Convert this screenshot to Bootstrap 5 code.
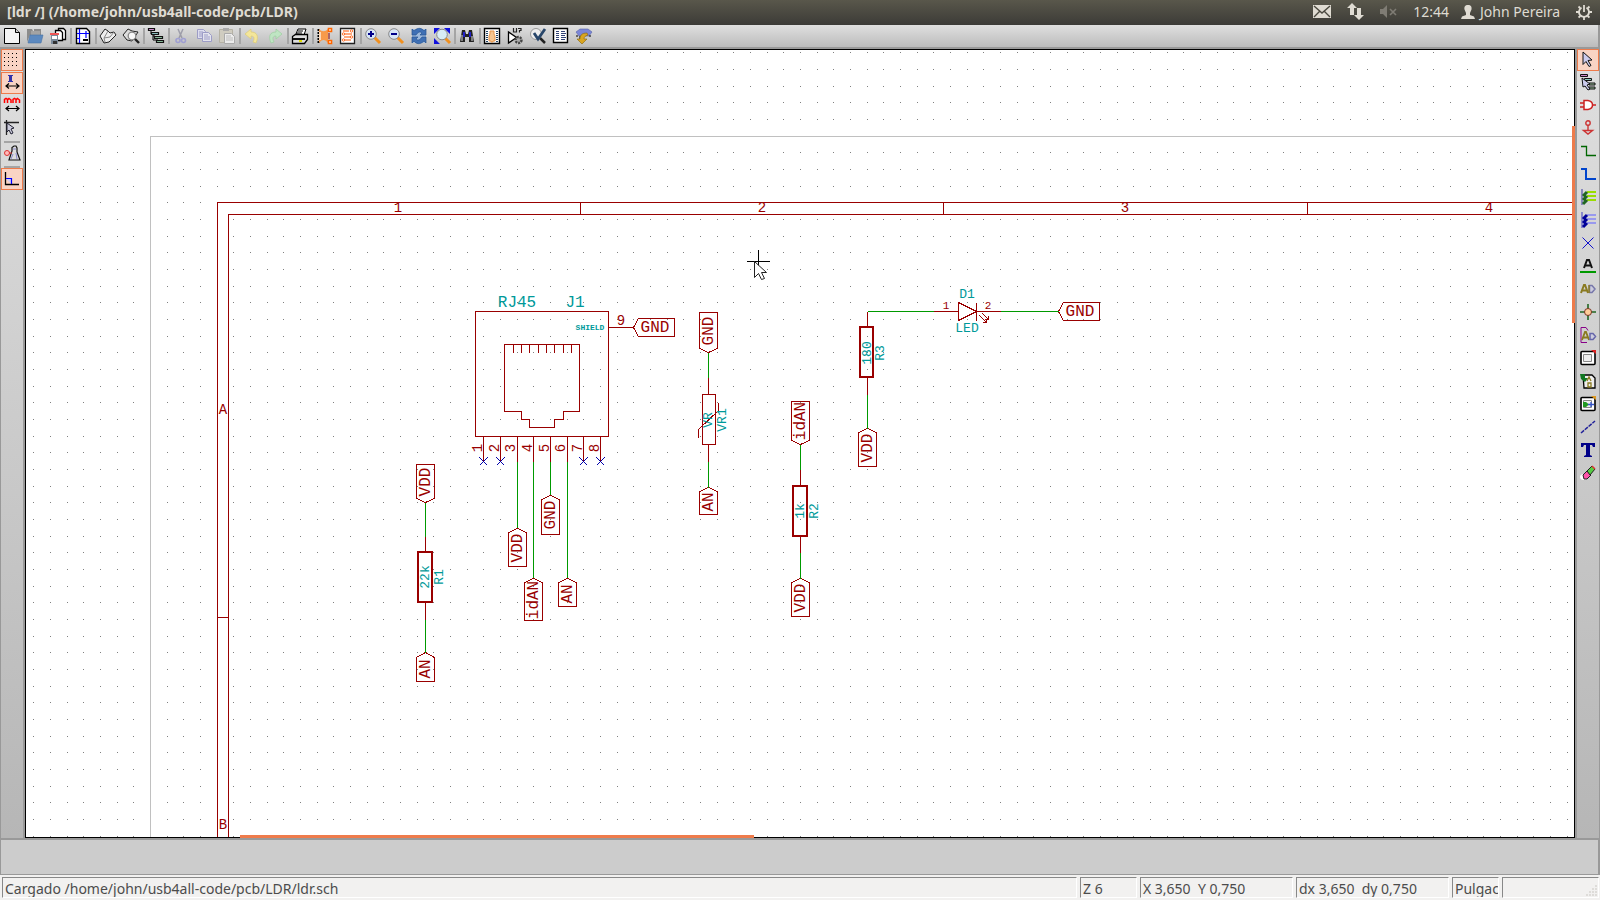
<!DOCTYPE html>
<html lang="es">
<head>
<meta charset="utf-8">
<meta name="viewport" content="width=device-width, initial-scale=1">
<title>[ldr /] (/home/john/usb4all-code/pcb/LDR)</title>
<link href="https://cdn.jsdelivr.net/npm/bootstrap@5.3.0/dist/css/bootstrap.min.css" rel="stylesheet">
<style>
body{font-family:"Noto Sans","Open Sans",sans-serif;font-size:14px;line-height:20px;background:#999}
.titlebar{height:25px;background:linear-gradient(#59574b,#3c3b37);color:#dfdbd2;font-size:14px;padding:0 8px 2px 7px}
.titlebar svg{display:block}
.user-icon{margin:0 5px 0 12px}
.toolstrip{height:22px;background:linear-gradient(#dfdfdf,#bcbcbc);padding-left:1px;margin-right:2px}
.tool{width:23px;height:22px;padding:3px 4px 3px 3px;border:0;background:none;flex:none}
.tool svg,.sidetool svg{display:block;width:16px;height:16px;overflow:visible}
.vrule{width:2px;height:16px;background:#a5a5a5;flex:none}
.workarea{margin-top:2px;min-height:0}
.sidebar-l,.sidebar-r{background:linear-gradient(#dfdfdf,#b6b6b6);flex:none}
.sidebar-l{width:23px;border-left:1px solid #999;margin-right:2px}
.sidebar-r{width:23px;margin-left:2px;border-right:1px solid #999}
.sidetool{width:22px;height:22px;margin-bottom:1px;padding:1px 2px 3px;border:1px solid transparent;background:none;flex:none}
.sidetool.chosen{background:#f9d4c4;border-color:#ee7b4b}
.hrule{height:2px;width:16px;margin-left:3px;background:#a5a5a5;flex:none}
.sheet{background:#fff;border:1px solid #000;min-width:0}
.sheet>svg{position:absolute;inset:0;width:100%;height:100%}
.bar-v,.bar-h{position:absolute;background:#ee7b4b}
.bar-v{right:-1px;top:9.7%;height:25%;width:3px}
.bar-h{bottom:-1px;left:13.8%;width:33.2%;height:3px}
.msgpanel{height:36px;margin:1px 1px 0 0;background:#ccc;border:1px solid #999}
.statusline{background:#f2f1f0;height:25px;padding:2px 1px 2px 2px;gap:3px;color:#4c4c4c}
.cell{border-top:1px solid #888;border-left:1px solid #888;border-right:1px solid #fff;border-bottom:1px solid #fff;padding-left:2px;height:21px;line-height:21px;white-space:pre;overflow:hidden;flex:none}
.w-z{width:57px}.w-xy{width:153px}.w-u{width:47px}.w-e{width:97px}
.sch{fill:none;stroke:#900;stroke-width:1;shape-rendering:crispEdges}
.sch .wire{stroke:#090}
.sch .nc{stroke:#00a}
.sch .thick{stroke-width:2}
.sch text{stroke:none;fill:#900;font-family:"Liberation Mono",monospace;font-size:16px;text-anchor:middle}
.sch .ref{fill:#099}
.sch .s13{font-size:13px}
.sch .s14{font-size:14px}
.sch .s11{font-size:11px}
.sch .s8{font-size:8px;font-weight:bold}
</style>
</head>
<body class="vh-100 d-flex flex-column overflow-hidden">
<header class="titlebar d-flex align-items-center justify-content-between flex-shrink-0">
  <span class="fw-bold">[ldr /] (/home/john/usb4all-code/pcb/LDR)</span>
  <div class="d-flex align-items-center">
    <svg width="18" height="13" viewBox="0 0 18 13"><path fill="#dfdbd2" d="M0 0h18v13H0z"/><path d="M1 1l8 7 8-7M1 12l6-6M17 12l-6-6" fill="none" stroke="#4a483f" stroke-width="1.4"/></svg>
    <svg class="ms-3" width="17" height="17" viewBox="0 0 17 17" fill="#dfdbd2"><path d="M5 0l5 5H7v7H3V5H0zM12 17l5-5h-3V5h-4v7H7z"/></svg>
    <svg class="ms-3" width="17" height="14" viewBox="0 0 17 14"><path fill="#7f7c74" d="M0 4h3l4-4v13l-4-4H0z"/><path d="M10 4l6 6M16 4l-6 6" stroke="#7f7c74" stroke-width="1.6"/></svg>
    <span class="ms-3">12:44</span>
    <svg class="user-icon" width="14" height="14" viewBox="0 0 14 14"><path fill="#dfdbd2" d="M7 0c3 0 4 2 3.500 4.500L9 8v2l4 1.500 1 2.500H0l1-2.500L5 10V8L3.500 4.500C3 2 4 0 7 0z"/></svg>
    <span class="me-3">John Pereira</span>
    <svg width="16" height="16" viewBox="0 0 16 16" fill="none" stroke="#dfdbd2"><path stroke-width="1.800" d="M5.500 3.600a5 5 0 1 0 5 0M8 1v7"/><path stroke-width="1.800" d="M2.500 2.500l1.500 1.500M13.500 2.500L12 4M0 8h3M13 8h3M2.500 13.500L4.500 12M13.500 13.500L11.500 12M8 13v3"/></svg>
  </div>
</header>

<nav class="toolstrip d-flex align-items-center flex-shrink-0" aria-label="Herramientas">
  <button class="tool" aria-label="Nuevo"><svg viewBox="0 0 16 16"><path d="M.5.500h11l4 4v11H.5z" fill="#f4f4f4" stroke="#000"/><path d="M11.500.500v4h4" fill="#ccc" stroke="#000"/></svg></button>
  <button class="tool" aria-label="Abrir"><svg viewBox="0 0 16 16"><path d="M0 14V1h5l1 2h1V1h7v6H3z" fill="#8b8b8b"/><path d="M4 4h9M4 6h9" stroke="#bbb"/><path d="M1 15l2-8h13l-2 8z" fill="#5c89bf" stroke="#4872a5" stroke-width=".6"/></svg></button>
  <button class="tool" aria-label="Guardar"><svg viewBox="0 0 16 16"><path d="M8.500.500h5l2 2v9h-7z" fill="#fff" stroke="#000" stroke-width="1.300"/><path d="M5.500 2.500h5l2 2v8h-7z" fill="#fff" stroke="#000" stroke-width="1.300"/><path d="M1 6h7v10H1z" fill="#7a8a9a"/><path d="M0 5h9v2H0z" fill="#e55"/><path d="M2 8h5v3H2z" fill="#fff"/><path d="M3 13h4v3H3z" fill="#333"/></svg></button>
  <i class="vrule"></i>
  <button class="tool" aria-label="Página"><svg viewBox="0 0 16 16"><path d="M1.500.500h10l3 3v12h-13z" fill="#fff" stroke="#000" stroke-width="1.400"/><path d="M4.500 1v14M2 5.500h12M11 3v7M2 10.500h3" stroke="#00f" stroke-width="1.200"/><path d="M8 11h5v2H8z" fill="#000"/></svg></button>
  <i class="vrule"></i>
  <button class="tool" aria-label="Biblioteca"><svg viewBox="0 0 16 16"><path d="M0 8l5-7 3 2 2 2 4-1 2 3-7 7-5 1z" fill="#eee" stroke="#222"/><path d="M8 3L4 10l1 4M4 10l6-1 4-5" fill="none" stroke="#888"/></svg></button>
  <button class="tool" aria-label="Examinar"><svg viewBox="0 0 16 16"><path d="M0 7l5-6 4 2 6 1-6 9-5-1z" fill="#ddd" stroke="#222"/><circle cx="9" cy="8" r="3.800" fill="#f7f7f7" stroke="#888" stroke-width="1.300"/><path d="M12 11l4 4" stroke="#222" stroke-width="2.400"/></svg></button>
  <i class="vrule"></i>
  <button class="tool" aria-label="Jerarquía"><svg viewBox="0 0 16 16"><path d="M3 3v3h3v3h3v5h3M5 6v6h3" fill="none" stroke="#000"/><g stroke="#111" stroke-width="1.200"><path d="M.5.500h6v2h-6z" fill="#c8c"/><path d="M3.500 4.500h7v2h-7z" fill="#8bb"/><path d="M6.500 8.500h8v2h-8zM8.500 12.500h7v2h-7z" fill="#8b9"/></g></svg></button>
  <i class="vrule"></i>
  <button class="tool" aria-label="Cortar" disabled><svg viewBox="0 0 16 16" opacity=".7"><path d="M5 1l4 9M10 1l-4 9" stroke="#889" stroke-width="1.500"/><g fill="none" stroke="#8f8fd8" stroke-width="1.600"><circle cx="5" cy="12.500" r="2"/><circle cx="10.500" cy="12.500" r="2"/></g></svg></button>
  <button class="tool" aria-label="Copiar" disabled><svg viewBox="0 0 16 16" stroke="#9c9cc6"><path d="M1.500 1.500h6l2 2v7h-8z" fill="#dde"/><path d="M3 4h4M3 6h3M3 8h3"/><path d="M6.500 4.500h6l3 3v6h-9z" fill="#e4e4ee"/><path d="M8 7h4M8 9h6M8 11h6"/></svg></button>
  <button class="tool" aria-label="Pegar" disabled><svg viewBox="0 0 16 16"><path d="M.500 1.500h13v13H.500z" fill="#cfccc0" stroke="#b5b2a5"/><path d="M4 0h6v3H4z" fill="#aaa"/><path d="M5.500 5.500h7l3 3v7h-10z" fill="#ececec" stroke="#aaa"/><path d="M7 8h5M7 10h7M7 12h7" stroke="#bbb"/></svg></button>
  <i class="vrule"></i>
  <button class="tool" aria-label="Deshacer" disabled><svg viewBox="0 0 16 16"><path d="M1 6l6-5v3c6 0 8 4 5 11l-3-1c2-4 1-6-2-6v3z" fill="#f4e69a" stroke="#dccb72" stroke-width=".7"/></svg></button>
  <button class="tool" aria-label="Rehacer" disabled><svg viewBox="0 0 16 16"><path d="M15 6L9 1v3C3 4 1 8 4 15l3-1C5 10 6 8 9 8v3z" fill="#bfe5c3" stroke="#9cce9f" stroke-width=".7"/></svg></button>
  <i class="vrule"></i>
  <button class="tool" aria-label="Imprimir"><svg viewBox="0 0 16 16"><path d="M4 6l2-5h8l-2 6z" fill="#fff" stroke="#000"/><path d="M6 3h5M5 5h5" stroke="#000"/><path d="M.5 8.500l3-2h12v5l-3 4H.5z" fill="#ddd" stroke="#000" stroke-width="1.300"/><path d="M1 10h12v2H1z" fill="#111"/><path d="M7 12h3v2H7z" fill="#dd0"/></svg></button>
  <i class="vrule"></i>
  <button class="tool" aria-label="Cvpcb"><svg viewBox="0 0 16 16"><path d="M1.500 1v14" stroke="#000" stroke-width="2" stroke-dasharray="2 1"/><path d="M2 1c3 3 6 3 9 0v14c-3-4-6-4-9 0z" fill="#f79a4a"/><path d="M3 4v8" stroke="#fdd9b8" stroke-width="2"/><path d="M12 5v6" stroke="#a66" stroke-width="2"/><path d="M11.500.500h3v3h-3zM11.500 12.500h3v3h-3z" fill="#fff" stroke="#f60" stroke-width="1.600"/></svg></button>
  <button class="tool" aria-label="Pcbnew"><svg viewBox="0 0 16 16"><path d="M.5.500h14v15H.5z" fill="#fff" stroke="#222" stroke-width="1.300"/><path d="M3 3h6M4 6h8M4 9h7M4 12h7" stroke="#f50"/><g fill="#fff" stroke="#f50" stroke-width=".8"><circle cx="11.500" cy="3" r="1.200"/><circle cx="3.500" cy="6" r="1.200"/><circle cx="11.500" cy="9" r="1.200"/><circle cx="3.500" cy="12" r="1.200"/></g></svg></button>
  <i class="vrule"></i>
  <button class="tool" aria-label="Acercar"><svg viewBox="0 0 16 16"><path d="M9.500 9.500l5.500 5.500" stroke="#f09020" stroke-width="3"/><circle cx="6" cy="6" r="5.300" fill="#d8e6f6" stroke="#888"/><path d="M6 3v6M3 6h6" stroke="#008" stroke-width="2"/></svg></button>
  <button class="tool" aria-label="Alejar"><svg viewBox="0 0 16 16"><path d="M9.500 9.500l5.500 5.500" stroke="#f09020" stroke-width="3"/><circle cx="6" cy="6" r="5.300" fill="#d8e6f6" stroke="#888"/><path d="M3 6h6" stroke="#008" stroke-width="2"/></svg></button>
  <button class="tool" aria-label="Redibujar"><svg viewBox="0 0 16 16"><path d="M1 1h14v14H1z" fill="#9db9dc"/><path d="M1 7V1l2 2c4-4 8-3 10 0l2-2v6H9l2-2c-2-2-4-1-6 2zM15 9v6l-2-2c-4 4-8 3-10 0l-2 2V9h6l-2 2c2 2 4 1 6-2z" fill="#3f70b5" stroke="#285490" stroke-width=".7"/></svg></button>
  <button class="tool" aria-label="Ajustar"><svg viewBox="0 0 16 16"><path d="M0 0h6L0 6zM16 0h-6l6 6zM0 16h6l-6-6z" fill="#11d"/><path d="M11 10l5 5" stroke="#f09020" stroke-width="3"/><circle cx="8" cy="6.500" r="5.300" fill="#d8ecf6" stroke="#888"/></svg></button>
  <i class="vrule"></i>
  <button class="tool" aria-label="Buscar"><svg viewBox="0 0 16 16"><path d="M3 2h3l1 4h2l1-4h3l1 6 1 6h-5V9H6v5H1l1-6z" fill="#222"/><path d="M5 4v5M11 4v5" stroke="#22e" stroke-width="1.600"/><path d="M3 7v6M13 8v5" stroke="#ddd"/></svg></button>
  <i class="vrule"></i>
  <button class="tool" aria-label="Huella"><svg viewBox="0 0 16 16"><path d="M.5.500h15v15H.5z" fill="#fff" stroke="#000" stroke-width="1.400"/><path d="M3 3v11M13 3v11" stroke="#246" stroke-width="2" stroke-dasharray="1 1"/><path d="M6 3h4v3l1 2v5H9v1H7v-1H5V8l1-2z" fill="#f6c590" stroke="#e8954a"/></svg></button>
  <button class="tool" aria-label="Anotar"><svg viewBox="0 0 16 16"><path d="M1.500 4v11l8-5.500z" fill="#fff" stroke="#000" stroke-width="1.300"/><path d="M6.500 0v4h3V0M11 .500h3v2h-1.500v2" fill="none" stroke="#222" stroke-width="1.200"/><circle cx="11.500" cy="12" r="3" fill="#aaa" stroke="#444" stroke-width="2.400" stroke-dasharray="2 1"/></svg></button>
  <button class="tool" aria-label="Comprobar"><svg viewBox="0 0 16 16"><circle cx="6" cy="6" r="5.500" fill="#eee" stroke="#999"/><path d="M10 10l5 5" stroke="#222" stroke-width="2.500"/><path d="M4 5l4 6 7-10" fill="none" stroke="#28466a" stroke-width="2.800"/></svg></button>
  <button class="tool" aria-label="Netlist"><svg viewBox="0 0 16 16"><path d="M.5.500h14v14H.5z" fill="#fff" stroke="#000" stroke-width="1.400"/><g stroke="#347" shape-rendering="crispEdges"><path d="M3 3.500h3M3 5.500h3M3 7.500h3M3 9.500h3M3 11.500h3" /><path d="M8 3.500h4M8 5.500h5M8 7.500h4M8 9.500h5M8 11.500h4"/></g></svg></button>
  <button class="tool" aria-label="BOM"><svg viewBox="0 0 16 16"><path d="M0 4l4-3h8l4 3-3 4H3z" fill="#7b86d8" stroke="#5661a8" stroke-width=".6"/><path d="M1 7v2M4 8v3M14 7v2" stroke="#444" stroke-width="1.500"/><path d="M11 5c-6 0-7 3-7 6H1l5 5 5-5H8c0-2 1-3 4-4z" fill="#d9a521" stroke="#86640c" stroke-width=".6"/></svg></button>
</nav>

<main class="workarea d-flex flex-fill">
  <aside class="sidebar-l d-flex flex-column">
    <button class="sidetool chosen" aria-label="Rejilla"><svg viewBox="0 0 16 16" fill="none" stroke="#000" stroke-width="1" stroke-dasharray="1 3" shape-rendering="crispEdges"><path d="M0 2.500h14M0 6.500h14M0 10.500h14M0 14.500h14"/></svg></button>
    <button class="sidetool chosen" aria-label="Pulgadas"><svg viewBox="0 0 16 16"><path d="M4 1h5v1H8v5h1v1H4V7h1V2H4z" fill="#33a"/><path d="M2 12h12M5 9.500L2 12l3 2.500M12 9.500l3 2.500-3 2.500" fill="none" stroke="#000" stroke-width="1.200"/></svg></button>
    <button class="sidetool" aria-label="Milímetros"><svg viewBox="0 0 16 16"><path d="M.500 6V2.500L2 1.500l1.500 1V6M3.500 3l1.500-1.500L7 3v3M9 6V2.500l1.500-1L12 2.500V6M12 3l1.500-1.500 2 1.500v3" fill="none" stroke="#f00" stroke-width="1.500"/><path d="M2 11.500h12M5 9l-3 2.500L5 14M12 9l3 2.500-3 2.500" fill="none" stroke="#000" stroke-width="1.200"/></svg></button>
    <button class="sidetool" aria-label="Cursor"><svg viewBox="0 0 16 16"><path d="M0 2.500h15M2.500 0v15" stroke="#222" stroke-width="1.300"/><path d="M3 3l7 5-3 1 2 4-2 1-2-4-2 2z" fill="#ccd" stroke="#223"/></svg></button>
    <i class="hrule"></i>
    <button class="sidetool" aria-label="Pines ocultos"><svg viewBox="0 0 16 16"><path d="M8 6V2.500L10 1h2l1 2v4l3 8H5z" fill="#ddd" stroke="#111" stroke-width="1.200"/><path d="M9 4h3M9 9l-2 5M12 8l1 6" stroke="#88c"/><circle cx="3" cy="8" r="2.500" fill="#fbb" stroke="#d33"/><path d="M5 8h3" stroke="#d33"/></svg></button>
    <i class="hrule"></i>
    <button class="sidetool chosen" aria-label="Ángulo recto"><svg viewBox="0 0 16 16"><path d="M1.500 2v12.500H15" fill="none" stroke="#000" stroke-width="1.300"/><path d="M2 8.500h5.500V14" fill="#ccf" stroke="#00f" stroke-width="1.200"/></svg></button>
  </aside>

  <section class="sheet flex-fill position-relative">
    <svg role="img" aria-label="Esquema LDR">
      <defs>
        <pattern id="grid" width="50" height="50" patternUnits="userSpaceOnUse" x="7" y="2">
          <path fill="#808080" shape-rendering="crispEdges" d="M0 0h1v1H0zM17 0h1v1h-1zM34 0h1v1h-1zM0 17h1v1H0zM17 17h1v1h-1zM34 17h1v1h-1zM0 34h1v1H0zM17 34h1v1h-1zM34 34h1v1h-1z"/>
        </pattern>
      </defs>
      <rect width="100%" height="100%" fill="url(#grid)"/>

      <!-- one-pixel lines, centred on the pixels -->
      <g class="sch" transform="translate(-25.500 -49.500)">
        <!-- sheet edge and frame -->
        <path stroke="#c0c0c0" d="M150 3000V136H4000"/>
        <path d="M217 3000V202H4000M228 3000V214H4000M580 202v12M943 202v12M1307 202v12M217 617h11"/>
        <!-- J1, RJ45 connector -->
        <path d="M475 311H608V436H475zM504 344H579V411H563V419H554V427H529V419H521V411H504z"/>
        <path d="M513 344v8M521 344v8M529 344v8M538 344v8M546 344v8M554 344v8M563 344v8M571 344v8"/>
        <path d="M483 436v25M500 436v25M517 436v25M533 436v25M550 436v25M567 436v25M583 436v25M600 436v25M608 327h25"/>
        <path class="nc" d="M479 457l8 8m0-8l-8 8M496 457l8 8m0-8l-8 8M579 457l8 8m0-8l-8 8M596 457l8 8m0-8l-8 8"/>
        <path d="M633 327l5-9h36v18h-36z"/>
        <path class="wire" d="M517 461v67M533 461v117M550 461v34M567 461v117"/>
        <path d="M517 528l9 4v34h-18v-34zM533 578l9 4v38h-18v-38zM550 495l9 4v35h-18v-35zM567 578l9 4v24h-18v-24z"/>
        <!-- R1 -->
        <path d="M416 464h18v34l-9 4-9-4zM425 536v16M425 602v17M425 652l9 5v24h-18v-24z"/>
        <path class="wire" d="M425 502v34M425 619v33"/>
        <!-- VR1 -->
        <path d="M699 312h18v36l-9 4-9-4zM708 377v17M702 394h13v50h-13zM708 444v17M708 487l9 4v23h-18v-23zM698 437v-8l20-19v-8"/>
        <path class="wire" d="M708 352v25M708 461v26"/>
        <!-- R2 -->
        <path d="M791 401h18v39l-9 4-9-4zM800 469v17M800 536v16M800 578l9 4v34h-18v-34z"/>
        <path class="wire" d="M800 444v25M800 552v26"/>
        <!-- R3 and D1 -->
        <path d="M867 311v16M867 377v17M867 428l9 4v34h-18v-34zM933 311h25M976 311h24M958 302v18l18-9zM976 302v18M1058 311l5-9h36v18h-36z"/>
        <path d="M979 315l7 7m0-4v4h-4M982 313l6 6m0-4v4h-4"/>
        <path class="wire" d="M867 311h66M1000 311h58M867 394v34"/>
        <!-- crosshair -->
        <path stroke="#000" d="M746 261h23M758 249v23"/>
      </g>

      <!-- resistor bodies, pointer and lettering -->
      <g class="sch" transform="translate(-26 -50)">
        <path class="thick" d="M418 552h14v50h-14zM793 486h14v50h-14zM860 327h13v50h-13z"/>
        <path shape-rendering="auto" fill="#fff" stroke="#222" d="M754.500 261.500v16l4-4 3 6 3-1-3-6h5z"/>

        <text class="s14" x="398" y="212">1</text><text class="s14" x="762" y="212">2</text><text class="s14" x="1125" y="212">3</text><text class="s14" x="1489" y="212">4</text><text class="s14" x="223" y="414">A</text><text class="s14" x="223" y="829">B</text>

        <text class="s14" transform="translate(482 448) rotate(-90)">1</text><text class="s14" transform="translate(499 448) rotate(-90)">2</text><text class="s14" transform="translate(515 448) rotate(-90)">3</text><text class="s14" transform="translate(532 448) rotate(-90)">4</text><text class="s14" transform="translate(549 448) rotate(-90)">5</text><text class="s14" transform="translate(565 448) rotate(-90)">6</text><text class="s14" transform="translate(582 448) rotate(-90)">7</text><text class="s14" transform="translate(599 448) rotate(-90)">8</text>
        <text class="s14" x="621" y="325">9</text>
        <text class="ref" x="517" y="307">RJ45</text><text class="ref" x="575" y="307">J1</text><text class="ref s8" x="590" y="330">SHIELD</text>
        <text x="655" y="332">GND</text>
        <text transform="translate(522 548) rotate(-90)">VDD</text><text transform="translate(538 600) rotate(-90)">idAN</text><text transform="translate(555 515) rotate(-90)">GND</text><text transform="translate(572 594) rotate(-90)">AN</text>

        <text transform="translate(430 482) rotate(-90)">VDD</text><text transform="translate(430 669) rotate(-90)">AN</text>
        <text class="ref s13" transform="translate(429 577) rotate(-90)">22k</text><text class="ref s13" transform="translate(443 577) rotate(-90)">R1</text>

        <text transform="translate(713 331) rotate(-90)">GND</text><text transform="translate(713 502) rotate(-90)">AN</text>
        <text class="ref s13" transform="translate(712 420) rotate(-90)">VR</text><text class="ref s13" transform="translate(726 420) rotate(-90)">VR1</text>

        <text transform="translate(805 421) rotate(-90)">idAN</text><text transform="translate(805 598) rotate(-90)">VDD</text>
        <text class="ref s13" transform="translate(804 511) rotate(-90)">1k</text><text class="ref s13" transform="translate(818 511) rotate(-90)">R2</text>

        <text transform="translate(872 448) rotate(-90)">VDD</text><text x="1080" y="316">GND</text>
        <text class="s11" x="946" y="309">1</text><text class="s11" x="988" y="309">2</text>
        <text class="ref s13" x="967" y="298">D1</text><text class="ref s13" x="967" y="332">LED</text>
        <text class="ref s13" transform="translate(871 353) rotate(-90)">180</text><text class="ref s13" transform="translate(884 353) rotate(-90)">R3</text>
      </g>
    </svg>
    <div class="bar-v"></div>
    <div class="bar-h"></div>
  </section>

  <aside class="sidebar-r d-flex flex-column">
    <button class="sidetool chosen" aria-label="Seleccionar"><svg viewBox="0 0 16 16"><path d="M3 1l9 8-4 .500 3 5-2 1-3-5-3 3z" fill="#cce" stroke="#111"/></svg></button>
    <button class="sidetool" aria-label="Navegar"><svg viewBox="0 0 16 16"><path d="M.5.500h7v2h-7z" fill="#c8c" stroke="#111"/><path d="M4.500 4.500h7v2h-7z" fill="#8cb" stroke="#111"/><path d="M9 9h6v2H9zM9 13h6v2H9z" fill="#9b9" stroke="#111"/><path d="M2 4l8 6-3 1 3 4-2 1-3-4-2 1z" fill="#cce" stroke="#111"/></svg></button>
    <button class="sidetool" aria-label="Componente"><svg viewBox="0 0 16 16"><path d="M0 6h4M0 10h4M12 8h4" stroke="#c22" stroke-width="1.500"/><path d="M4 3.500h4c6 1 6 8 0 9H4z" fill="#fff" stroke="#c22" stroke-width="1.500"/></svg></button>
    <button class="sidetool" aria-label="Alimentación"><svg viewBox="0 0 16 16" fill="none" stroke="#c33" stroke-width="1.400"><circle cx="8" cy="3" r="2.200"/><path d="M8 5v5M3.500 10.500h9L8 14z"/></svg></button>
    <button class="sidetool" aria-label="Hilo"><svg viewBox="0 0 16 16"><path d="M1 3.500h5.500v9H16" fill="none" stroke="#060" stroke-width="1.300"/></svg></button>
    <button class="sidetool" aria-label="Bus"><svg viewBox="0 0 16 16"><path d="M1 3h5v10h10" fill="none" stroke="#04c" stroke-width="2"/></svg></button>
    <button class="sidetool" aria-label="Entrada de hilo"><svg viewBox="0 0 16 16"><path d="M1 0h2v16H1z" fill="#88b"/><path d="M7 3h9M7 7h9M7 11h9" stroke="#9d0" stroke-width="2"/><path d="M3 7l4-4M3 11l4-4M3 15l4-4" stroke="#262" stroke-width="3"/></svg></button>
    <button class="sidetool" aria-label="Entrada de bus"><svg viewBox="0 0 16 16"><path d="M1 0h2v16H1z" fill="#88c"/><path d="M7 3h9M7 7h9M7 11h9" stroke="#99e" stroke-width="2"/><path d="M3 7l4-4M3 11l4-4M3 15l4-4" stroke="#009" stroke-width="3"/></svg></button>
    <button class="sidetool" aria-label="No conectado"><svg viewBox="0 0 16 16"><path d="M2.500 2.500l11 11M13.500 2.500l-11 11" stroke="#11c"/></svg></button>
    <button class="sidetool" aria-label="Etiqueta"><svg viewBox="0 0 16 16"><path d="M4 10L7 2h2l3 8M5 7.500h6" fill="none" stroke="#111" stroke-width="2"/><path d="M0 13h16v2H0z" fill="#090"/></svg></button>
    <button class="sidetool" aria-label="Etiqueta global"><svg viewBox="0 0 16 16" fill="none"><path d="M1 12l3-8h1l3 8M2 9.500h5" stroke="#8a7a20" stroke-width="2"/><path d="M9.500 4.500H12l3 3.500-3 3.500H9.500z" fill="#ccd" stroke="#77a" stroke-width="1.500"/><path d="M9 4v8" stroke="#8a7a20" stroke-width="1.500"/></svg></button>
    <button class="sidetool" aria-label="Unión"><svg viewBox="0 0 16 16"><path d="M8 0v16M0 8h16" stroke="#262" stroke-width="1.600"/><circle cx="8" cy="8" r="3.500" fill="#fc9" stroke="#732"/></svg></button>
    <button class="sidetool" aria-label="Etiqueta jerárquica"><svg viewBox="0 0 16 16" fill="none"><path d="M1 15.500V.500h5l2 3M1 15.500h6" stroke="#808"/><path d="M2 13l3-8h1l3 8M3 10.500h5" stroke="#8a7a20" stroke-width="1.800"/><path d="M10 6.500h3l2.500 3-2.500 3h-3z" fill="#ccd" stroke="#66a" stroke-width="1.500"/></svg></button>
    <button class="sidetool" aria-label="Hoja"><svg viewBox="0 0 16 16"><rect x="1" y="1.500" width="14" height="13" rx="1" fill="#fff" stroke="#000" stroke-width="1.600"/><path d="M3.500 4.500h8v7h-8z" fill="#eee" stroke="#888"/><path d="M11 0l5 4V0z" fill="#d22"/></svg></button>
    <button class="sidetool" aria-label="Importar"><svg viewBox="0 0 16 16"><path d="M3 2h9l3 3v10H4z" fill="#eee" stroke="#000" stroke-width="1.300"/><path d="M0 1h5v4h3L5 9 1 6z" fill="#172"/><path d="M7 8l2-4 2 4M8 10h3v4H8z" fill="none" stroke="#8a7a20" stroke-width="1.300"/></svg></button>
    <button class="sidetool" aria-label="Pin de hoja"><svg viewBox="0 0 16 16"><rect x="1" y="1.500" width="14" height="13" rx="1" fill="#fff" stroke="#000" stroke-width="1.600"/><path d="M3.500 4.500h8v7h-8z" fill="#eee" stroke="#888"/><path d="M11 0l5 4V0z" fill="#d92"/><path d="M3 6h3l3 2.500L6 11H3z" fill="#292"/><path d="M8 8.500h6M11 6v5" stroke="#35c" stroke-width="1.300"/></svg></button>
    <button class="sidetool" aria-label="Línea"><svg viewBox="0 0 16 16"><path d="M1 14L15 2" stroke="#229" stroke-width="1.500" stroke-dasharray="4 1"/></svg></button>
    <button class="sidetool" aria-label="Texto"><svg viewBox="0 0 16 16"><path d="M1 1h14v4h-2l-1-2h-2v10l2 1v1H4v-1l2-1V3H4L3 5H1z" fill="#008"/></svg></button>
    <button class="sidetool" aria-label="Borrar"><svg viewBox="0 0 16 16"><ellipse cx="4" cy="12" rx="4" ry="3" fill="#fff"/><path d="M3 10l4-4 4 4-4 4H4z" fill="#f5a" stroke="#222"/><path d="M7 6l5-5 3 3-5 6z" fill="#5c4" stroke="#222"/><path d="M12 1l3 3" stroke="#d33" stroke-width="1.500"/></svg></button>
  </aside>
</main>

<div class="msgpanel flex-shrink-0"></div>
<footer class="statusline d-flex flex-shrink-0">
  <div class="cell flex-fill">Cargado /home/john/usb4all-code/pcb/LDR/ldr.sch</div>
  <div class="cell w-z">Z 6</div>
  <div class="cell w-xy">X 3,650  Y 0,750</div>
  <div class="cell w-xy">dx 3,650  dy 0,750</div>
  <div class="cell w-u">Pulgac</div>
  <div class="cell w-e d-flex justify-content-end align-items-end"><svg width="12" height="12" viewBox="0 0 12 12" fill="#dedcd9"><path d="M9 0h2v2H9zM6 3h2v2H6zM9 3h2v2H9zM3 6h2v2H3zM6 6h2v2H6zM9 6h2v2H9zM0 9h2v2H0zM3 9h2v2H3zM6 9h2v2H6zM9 9h2v2H9z"/></svg></div>
</footer>
<script src="https://cdn.jsdelivr.net/npm/bootstrap@5.3.0/dist/js/bootstrap.bundle.min.js"></script>
</body>
</html>
